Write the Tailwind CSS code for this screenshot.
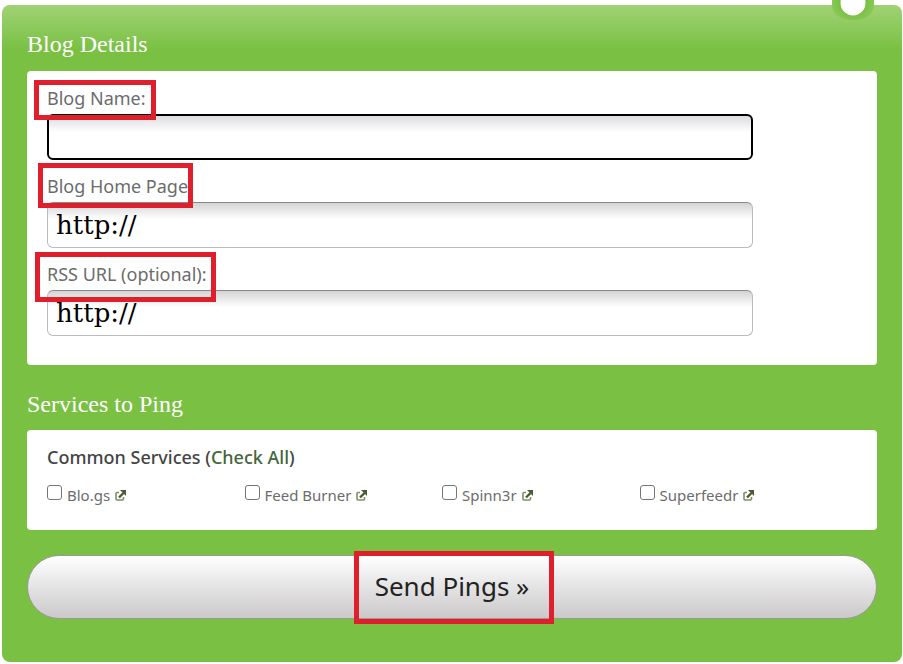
<!DOCTYPE html>
<html lang="en">
<head>
  <meta charset="UTF-8" />
  <meta name="viewport" content="width=device-width, initial-scale=1.0" />
  <title>Send Pings</title>
  <script src="https://cdn.jsdelivr.net/npm/@tailwindcss/browser@4"></script>
</head>
<body class="bg-white pt-[5px] pl-[2px] pr-px font-['Noto_Sans',sans-serif] text-[#6c6c6c]">
  <form class="relative rounded-lg bg-[#7ac143] bg-linear-to-b from-[#a0d274] to-[#7ac143] to-[44px] px-[25px] pb-[43px]">
    <!-- Close badge, cut off by the top of the window -->
    <svg class="absolute -top-[5px] right-[28px] w-[42px] h-[24px]" viewBox="0 0 42 24" xmlns="http://www.w3.org/2000/svg">
      <defs>
        <radialGradient id="badge" gradientUnits="userSpaceOnUse" cx="21" cy="1" r="23">
          <stop offset="0.6" stop-color="#7ac143" />
          <stop offset="1" stop-color="#8cca5c" />
        </radialGradient>
      </defs>
      <path d="M0 0h42v5c0 10-9 15-21 15S0 15 0 5z" fill="url(#badge)" />
      <circle cx="21" cy="3" r="12.500" fill="#fff" />
    </svg>

    <h2 class="pt-[24px] pb-[12px] text-[24px] leading-[30px] text-white font-['Liberation_Serif',serif]">Blog Details</h2>
    <section class="rounded bg-white px-5 pt-[13px] pb-[29px]">
      <div class="mb-3">
        <div class="relative w-fit">
          <label for="blogName" class="block pb-[2px] text-[18px] leading-[28px]">Blog Name:</label>
          <span class="absolute z-10 -left-[13px] -top-[4px] w-[122px] h-[40px] border-5 border-[#e01f2d] pointer-events-none"></span>
        </div>
        <input id="blogName" type="text" class="block w-[706px] max-w-full h-[46px] rounded-md border-2 border-black px-2 text-[26px] text-black outline-none bg-linear-to-b from-[#dcdce0] to-white to-[16px] font-['DejaVu_Serif',serif]" />
      </div>
      <div class="mb-3">
        <div class="relative w-fit">
          <label for="homePage" class="block pb-[2px] text-[18px] leading-[28px]">Blog Home Page</label>
          <span class="absolute z-10 -left-[9px] -top-[9px] w-[155px] h-[45px] border-5 border-[#e01f2d] pointer-events-none"></span>
        </div>
        <input id="homePage" type="text" value="http://" class="block w-[706px] max-w-full h-[46px] rounded-md border border-[#bbb] border-t-[#888] px-2 text-[26px] text-black outline-none bg-linear-to-b from-[#d4d4d6] to-white to-[16px] font-['DejaVu_Serif',serif]" />
      </div>
      <div>
        <div class="relative w-fit">
          <label for="rssUrl" class="block pb-[2px] text-[18px] leading-[28px]">RSS URL (optional):</label>
          <span class="absolute z-10 -left-[12px] -top-[8px] w-[181px] h-[50px] border-5 border-[#e01f2d] pointer-events-none"></span>
        </div>
        <input id="rssUrl" type="text" value="http://" class="block w-[706px] max-w-full h-[46px] rounded-md border border-[#bbb] border-t-[#888] px-2 text-[26px] text-black outline-none bg-linear-to-b from-[#d4d4d6] to-white to-[16px] font-['DejaVu_Serif',serif]" />
      </div>
    </section>

    <h2 class="pt-[24px] pb-[11px] text-[24px] leading-[30px] text-white font-['Liberation_Serif',serif]">Services to Ping</h2>
    <section class="rounded bg-white pl-5 pr-[40px] pt-[13px] pb-[23px]">
      <h3 class="text-[18px] leading-[28px] font-medium text-[#444]">Common Services (<a href="#" class="text-[#44663a]">Check All</a>)</h3>
      <div class="grid grid-cols-4 pt-3 text-[15px] leading-6">
        <div class="flex items-center">
          <input id="blogs" type="checkbox" class="appearance-none size-[15px] mb-[5px] mr-[5px] rounded-[3px] border border-[#767676] bg-white checked:bg-[#44663a]" />
          <label for="blogs">Blo.gs</label>
          <a href="#" aria-label="Open Blo.gs" class="ml-[5px]">
            <svg class="size-[11px]" viewBox="0 0 11 11" fill="none" xmlns="http://www.w3.org/2000/svg">
              <path d="M4 2.500H2a1 1 0 00-1 1V9a1 1 0 001 1h5.500a1 1 0 001-1V7" stroke="#7f8f64" stroke-width="1.600" />
              <path d="M4 7.500L8.500 3" stroke="#4a5c32" stroke-width="2.400" />
              <path d="M5 0H11v6z" fill="#4a5c32" />
            </svg>
          </a>
        </div>
        <div class="flex items-center">
          <input id="feedBurner" type="checkbox" class="appearance-none size-[15px] mb-[5px] mr-[5px] rounded-[3px] border border-[#767676] bg-white checked:bg-[#44663a]" />
          <label for="feedBurner">Feed Burner</label>
          <a href="#" aria-label="Open Feed Burner" class="ml-[5px]">
            <svg class="size-[11px]" viewBox="0 0 11 11" fill="none" xmlns="http://www.w3.org/2000/svg">
              <path d="M4 2.500H2a1 1 0 00-1 1V9a1 1 0 001 1h5.500a1 1 0 001-1V7" stroke="#7f8f64" stroke-width="1.600" />
              <path d="M4 7.500L8.500 3" stroke="#4a5c32" stroke-width="2.400" />
              <path d="M5 0H11v6z" fill="#4a5c32" />
            </svg>
          </a>
        </div>
        <div class="flex items-center">
          <input id="spinn3r" type="checkbox" class="appearance-none size-[15px] mb-[5px] mr-[5px] rounded-[3px] border border-[#767676] bg-white checked:bg-[#44663a]" />
          <label for="spinn3r">Spinn3r</label>
          <a href="#" aria-label="Open Spinn3r" class="ml-[5px]">
            <svg class="size-[11px]" viewBox="0 0 11 11" fill="none" xmlns="http://www.w3.org/2000/svg">
              <path d="M4 2.500H2a1 1 0 00-1 1V9a1 1 0 001 1h5.500a1 1 0 001-1V7" stroke="#7f8f64" stroke-width="1.600" />
              <path d="M4 7.500L8.500 3" stroke="#4a5c32" stroke-width="2.400" />
              <path d="M5 0H11v6z" fill="#4a5c32" />
            </svg>
          </a>
        </div>
        <div class="flex items-center">
          <input id="superfeedr" type="checkbox" class="appearance-none size-[15px] mb-[5px] mr-[5px] rounded-[3px] border border-[#767676] bg-white checked:bg-[#44663a]" />
          <label for="superfeedr">Superfeedr</label>
          <a href="#" aria-label="Open Superfeedr" class="ml-[5px]">
            <svg class="size-[11px]" viewBox="0 0 11 11" fill="none" xmlns="http://www.w3.org/2000/svg">
              <path d="M4 2.500H2a1 1 0 00-1 1V9a1 1 0 001 1h5.500a1 1 0 001-1V7" stroke="#7f8f64" stroke-width="1.600" />
              <path d="M4 7.500L8.500 3" stroke="#4a5c32" stroke-width="2.400" />
              <path d="M5 0H11v6z" fill="#4a5c32" />
            </svg>
          </a>
        </div>
      </div>
    </section>

    <div class="relative mt-[25px]">
      <button type="submit" class="block w-full h-[64px] pb-[2px] rounded-full border border-[#999] bg-linear-to-b from-white to-[#cbc9ca] text-[26px] text-[#222]">Send Pings »</button>
      <span class="absolute -top-[4px] left-1/2 ml-[-98px] w-[200px] h-[73px] border-5 border-[#e01f2d] pointer-events-none"></span>
    </div>
  </form>
</body>
</html>
